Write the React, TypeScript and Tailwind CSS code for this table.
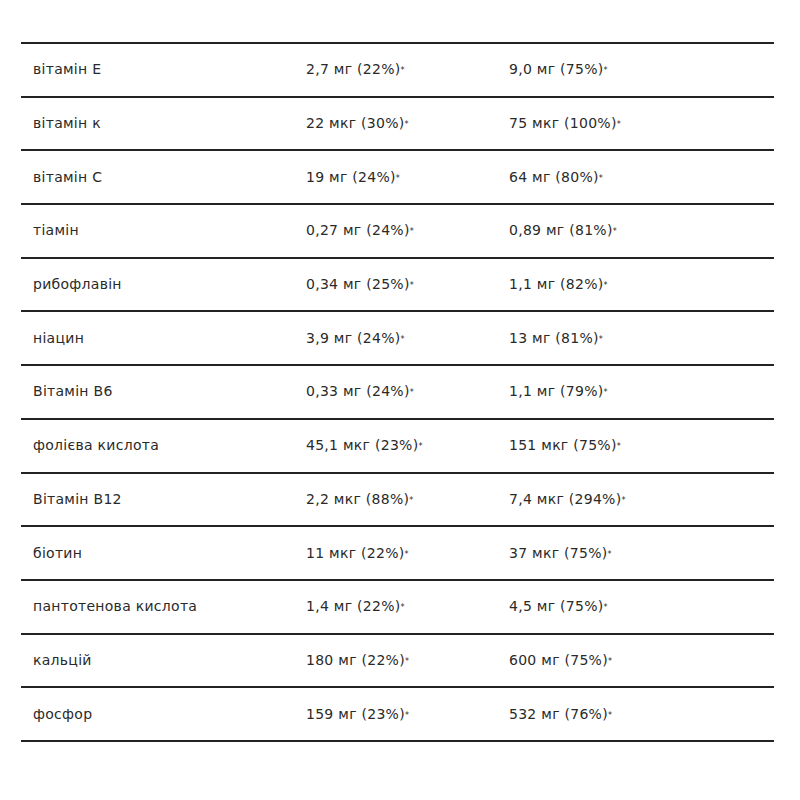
import React from 'react';

const rows: [string, string, string][] = [
  ['вітамін Е', '2,7 мг (22%)', '9,0 мг (75%)'],
  ['вітамін к', '22 мкг (30%)', '75 мкг (100%)'],
  ['вітамін С', '19 мг (24%)', '64 мг (80%)'],
  ['тіамін', '0,27 мг (24%)', '0,89 мг (81%)'],
  ['рибофлавін', '0,34 мг (25%)', '1,1 мг (82%)'],
  ['ніацин', '3,9 мг (24%)', '13 мг (81%)'],
  ['Вітамін В6', '0,33 мг (24%)', '1,1 мг (79%)'],
  ['фолієва кислота', '45,1 мкг (23%)', '151 мкг (75%)'],
  ['Вітамін В12', '2,2 мкг (88%)', '7,4 мкг (294%)'],
  ['біотин', '11 мкг (22%)', '37 мкг (75%)'],
  ['пантотенова кислота', '1,4 мг (22%)', '4,5 мг (75%)'],
  ['кальцій', '180 мг (22%)', '600 мг (75%)'],
  ['фосфор', '159 мг (23%)', '532 мг (76%)'],
];

function Value({ text }: { text: string }) {
  return (
    <span>
      {text}
      <sup className="text-[8px] relative -top-[1px] tracking-normal">*</sup>
    </span>
  );
}

export default function App() {
  return (
    <div className="w-[800px] h-[800px] bg-white pt-[42px] pl-[21px] font-['DejaVu_Sans',sans-serif] text-[14px] tracking-[0.02em] text-[#2a2a2a]">
      <div className="w-[753px] border-t-2 border-[#232323]">
        {rows.map(([name, a, b]) => (
          <div
            key={name}
            className="grid grid-cols-[273px_203px_1fr] items-center h-[53.7px] border-b-2 border-[#232323]"
          >
            <div className="pl-3">{name}</div>
            <div className="pl-3"><Value text={a} /></div>
            <div className="pl-3"><Value text={b} /></div>
          </div>
        ))}
      </div>
    </div>
  );
}
